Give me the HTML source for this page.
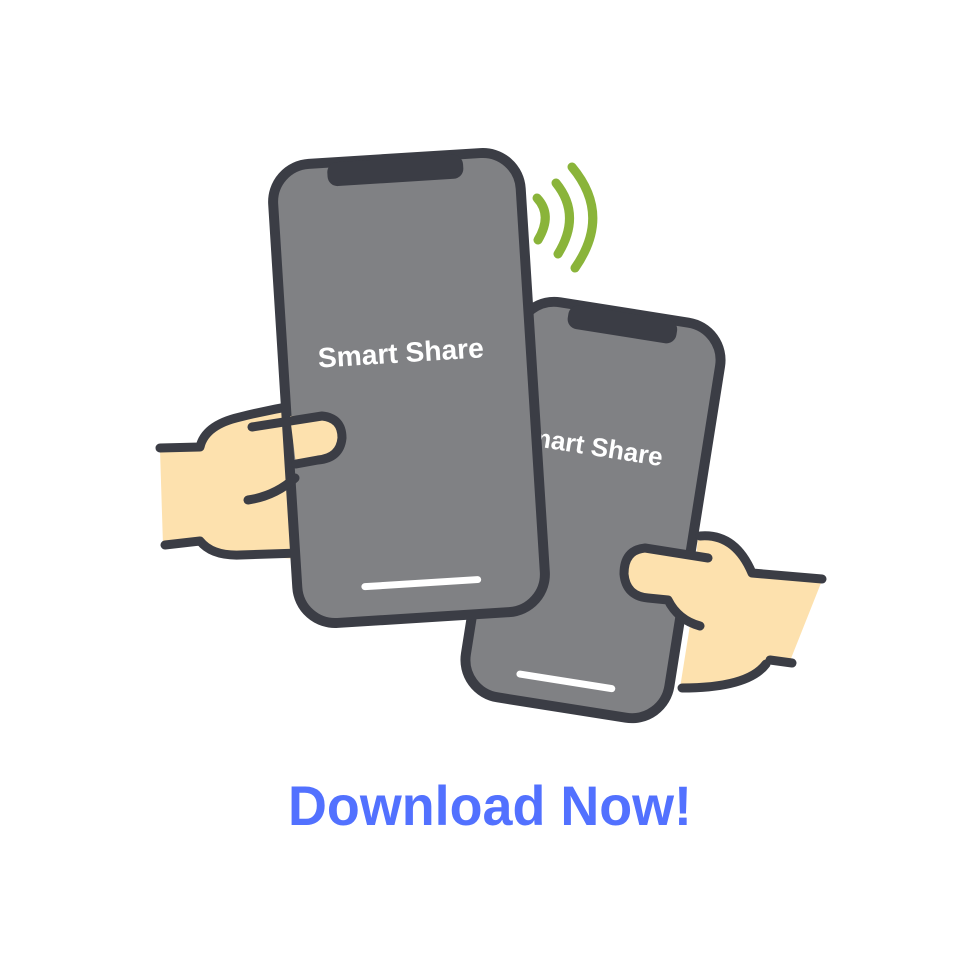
<!DOCTYPE html>
<html><head><meta charset="utf-8"><style>
html,body{margin:0;padding:0;background:#fff;width:980px;height:980px;overflow:hidden}
</style></head><body>
<svg width="980" height="980" viewBox="0 0 980 980" xmlns="http://www.w3.org/2000/svg">
<rect width="980" height="980" fill="#fff"/>
<g fill="none" stroke="#8ab43a" stroke-width="9" stroke-linecap="round">
<path d="M537 198 Q553 215 538 240"/>
<path d="M556 183 Q582 215 558 254"/>
<path d="M572 167 Q612 215 575 268"/>
</g>
<g transform="translate(593,510) rotate(9)">
<rect x="-103" y="-200" width="206" height="400" rx="38" fill="#808184" stroke="#3b3d45" stroke-width="10"/>
<rect x="-55" y="-200" width="110" height="24" rx="10" fill="#3b3d45"/>
<rect x="-50" y="170" width="100" height="7" rx="3.5" fill="#fff"/>
<text x="-16" y="-54" text-anchor="middle" font-family="Liberation Sans, sans-serif" font-weight="bold" font-size="26" fill="#fff">Smart Share</text>
</g>
<g stroke="#3b3d45" stroke-width="9" stroke-linejoin="round" stroke-linecap="round">
<path d="M160 450 L198 447 Q205 425 240 418 Q270 410 300 403 L310 560 L240 555 Q215 555 205 540 L163 545 Z" fill="#fde1ae" stroke="none"/>
<path d="M160 448 L200 447 Q205 425 240 417 Q268 410 298 405" fill="none"/>
<path d="M165 545 L200 541 Q212 556 240 555 L300 553" fill="none"/>
</g>
<g transform="translate(409,388) rotate(-3.6)">
<rect x="-124" y="-230" width="248" height="460" rx="38" fill="#808184" stroke="#3b3d45" stroke-width="10"/>
<rect x="-68" y="-230" width="136" height="24" rx="10" fill="#3b3d45"/>
<rect x="-60" y="192" width="120" height="7" rx="3.5" fill="#fff"/>
<text x="-6" y="-26" text-anchor="middle" font-family="Liberation Sans, sans-serif" font-weight="bold" font-size="28" fill="#fff" textLength="166" lengthAdjust="spacingAndGlyphs">Smart Share</text>
</g>
<g stroke="#3b3d45" stroke-width="9" stroke-linejoin="round" stroke-linecap="round">
<path d="M290 416 L322 415 Q342 417 342 438 Q340 458 318 460 L296 465 Z" fill="#fde1ae" stroke="none"/>
<path d="M252 427 L322 416 Q342 418 342 438 Q340 458 318 460 L296 464" fill="none"/>
<path d="M248 500 Q275 496 295 478" fill="none"/>
</g>
<g stroke="#3b3d45" stroke-width="9" stroke-linejoin="round" stroke-linecap="round">
<path d="M698 537 Q735 532 752 572 L823 578 L790 661 L768 662 Q748 688 680 688 L690 625 Z" fill="#fde1ae" stroke="none"/>
<path d="M700 536 Q735 533 752 573 L822 579" fill="none"/>
<path d="M770 660 L792 663" fill="none"/>
<path d="M766 664 Q748 688 682 688" fill="none"/>
<path d="M708 558 L645 548 Q624 550 624 574 Q626 596 648 598 L668 600 Q678 620 700 626" fill="#fde1ae"/>
</g>
<text x="490" y="825" text-anchor="middle" font-family="Liberation Sans, sans-serif" font-weight="bold" font-size="56" fill="#5271ff" textLength="404" lengthAdjust="spacingAndGlyphs">Download Now!</text>
</svg>
</body></html>
